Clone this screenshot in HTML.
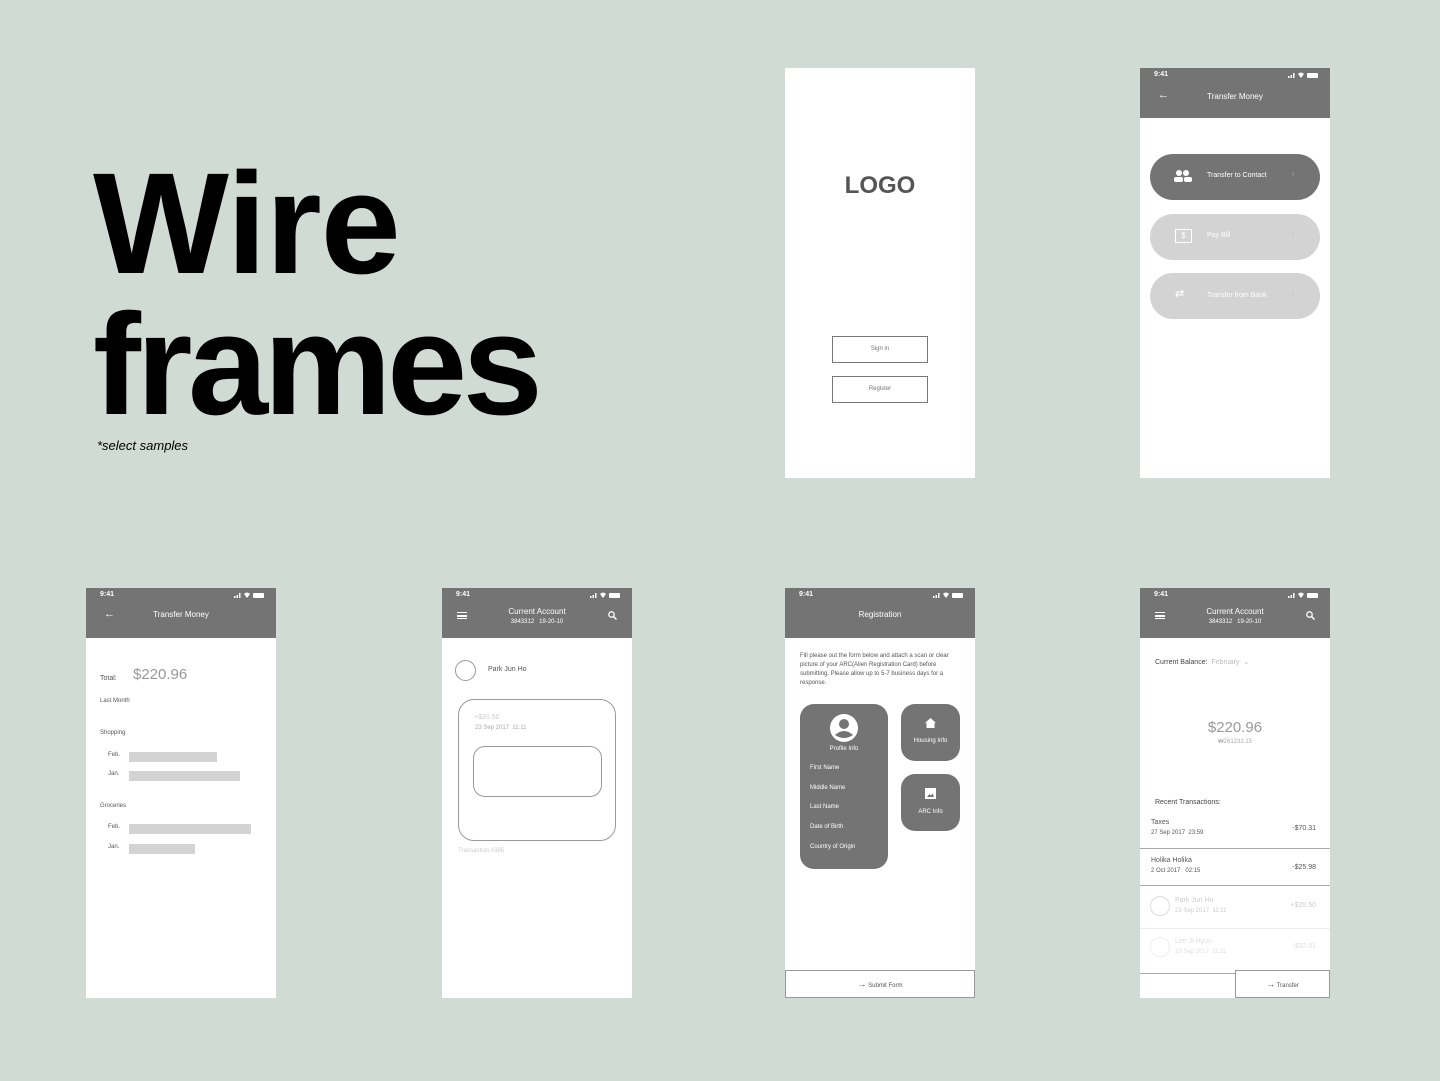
<!DOCTYPE html>
<html><head><meta charset="utf-8"><style>
*{margin:0;padding:0;box-sizing:border-box}
body{width:1440px;height:1081px;background:#d1dbd6;position:relative;overflow:hidden;font-family:"Liberation Sans",sans-serif}
.a{position:absolute;white-space:nowrap}
.ph{position:absolute;width:190px;height:410px;background:#fff;overflow:hidden}
.hd{position:absolute;left:0;top:0;width:190px;height:50px;background:#747474}
.t{font-size:7px;font-weight:bold;color:#fff;left:14px;top:3px}
.st{right:10px;top:4px;width:32px;height:6px}
.w{color:#fff}
.s7{font-size:7px}.s6{font-size:6px}.s8{font-size:8px}
.g{color:#555}.lg{color:#ccc}
.bar{position:absolute;height:10px;background:#d3d3d3}
</style></head><body>
<div class="a" style="left:93px;top:152px;font-size:144px;font-weight:bold;letter-spacing:-1px;line-height:1">Wire</div>
<div class="a" style="left:93px;top:293px;font-size:144px;font-weight:bold;letter-spacing:-4.5px;line-height:1">frames</div>
<div class="a" style="left:97px;top:438px;font-size:13px;font-style:italic">*select samples</div>

<div class="ph" style="left:785px;top:68px">
<div class="a" style="left:0;width:190px;text-align:center;top:104px;font-size:24px;font-weight:bold;color:#555">LOGO</div>
<div class="a s6" style="left:47px;top:268px;width:96px;height:27px;border:1px solid #777;text-align:center;line-height:25px;color:#777">Sign in</div>
<div class="a s6" style="left:47px;top:308px;width:96px;height:27px;border:1px solid #777;text-align:center;line-height:25px;color:#777">Register</div>
</div>

<div class="ph" style="left:1140px;top:68px">
<div class="hd"><div class="a t">9:41</div>
<svg class="a st" viewBox="0 0 32 6"><rect x="0" y="4" width="1.5" height="2" fill="#fff"/><rect x="2.5" y="3" width="1.5" height="3" fill="#fff"/><rect x="5" y="1" width="1.5" height="5" fill="#fff"/><path d="M10 2 Q13 -1 16 2 L13 6Z" fill="#fff"/><rect x="19" y="1" width="11" height="5" rx="1" fill="#fff"/></svg>
<div class="a w" style="left:18px;top:21px;font-size:11px">←</div>
<div class="a w s8" style="left:0;width:190px;text-align:center;top:24px">Transfer Money</div></div>
<div class="a" style="left:10px;top:86px;width:170px;height:46px;border-radius:23px;background:#747474"></div>
<svg class="a" style="left:34px;top:101px" width="18" height="13" viewBox="0 0 18 13"><circle cx="5" cy="4" r="3" fill="#fff"/><circle cx="12" cy="4" r="3" fill="#fff"/><rect x="0" y="8" width="9" height="5" rx="2" fill="#fff"/><rect x="10" y="8" width="8" height="5" rx="2" fill="#fff"/></svg>
<div class="a w s7" style="left:67px;top:104px">Transfer to Contact</div><div class="a w s7" style="left:152px;top:103px;color:#bbb">›</div>
<div class="a" style="left:10px;top:146px;width:170px;height:46px;border-radius:23px;background:#d3d3d3"></div>
<div class="a" style="left:35px;top:161px;width:17px;height:14px;border:1.5px solid #fff;color:#fff;font-size:8px;text-align:center;line-height:11px">$</div>
<div class="a w s7" style="left:67px;top:164px">Pay Bill</div><div class="a s7" style="left:152px;top:163px;color:#bbb">›</div>
<div class="a" style="left:10px;top:205px;width:170px;height:46px;border-radius:23px;background:#d3d3d3"></div>
<div class="a w" style="left:35px;top:219px;font-size:11px">⇄</div>
<div class="a w s7" style="left:67px;top:224px">Transfer from Bank</div><div class="a s7" style="left:152px;top:223px;color:#bbb">›</div>
</div>

<div class="ph" style="left:86px;top:588px">
<div class="hd"><div class="a t">9:41</div>
<svg class="a st" viewBox="0 0 32 6"><rect x="0" y="4" width="1.5" height="2" fill="#fff"/><rect x="2.5" y="3" width="1.5" height="3" fill="#fff"/><rect x="5" y="1" width="1.5" height="5" fill="#fff"/><path d="M10 2 Q13 -1 16 2 L13 6Z" fill="#fff"/><rect x="19" y="1" width="11" height="5" rx="1" fill="#fff"/></svg>
<div class="a w" style="left:18px;top:20px;font-size:11px">←</div>
<div class="a w s8" style="left:0;width:190px;text-align:center;top:22px">Transfer Money</div></div>
<div class="a s7 g" style="left:14px;top:87px">Total:</div>
<div class="a" style="left:47px;top:78px;font-size:15px;color:#999">$220.96</div>
<div class="a s6 g" style="left:14px;top:110px">Last Month</div>
<div class="a s6 g" style="left:14px;top:142px">Shopping</div>
<div class="a s6 g" style="left:22px;top:164px">Feb.</div><div class="bar" style="left:43px;top:164px;width:88px"></div>
<div class="a s6 g" style="left:22px;top:183px">Jan.</div><div class="bar" style="left:43px;top:183px;width:111px"></div>
<div class="a s6 g" style="left:14px;top:215px">Groceries</div>
<div class="a s6 g" style="left:22px;top:236px">Feb.</div><div class="bar" style="left:43px;top:236px;width:122px"></div>
<div class="a s6 g" style="left:22px;top:256px">Jan.</div><div class="bar" style="left:43px;top:256px;width:66px"></div>
</div>

<div class="ph" style="left:442px;top:588px">
<div class="hd"><div class="a t">9:41</div>
<svg class="a st" viewBox="0 0 32 6"><rect x="0" y="4" width="1.5" height="2" fill="#fff"/><rect x="2.5" y="3" width="1.5" height="3" fill="#fff"/><rect x="5" y="1" width="1.5" height="5" fill="#fff"/><path d="M10 2 Q13 -1 16 2 L13 6Z" fill="#fff"/><rect x="19" y="1" width="11" height="5" rx="1" fill="#fff"/></svg>
<div class="a" style="left:15px;top:24px;width:10px;height:7px;border-top:1.5px solid #fff;border-bottom:1.5px solid #fff"></div><div class="a" style="left:15px;top:27px;width:10px;height:1.5px;background:#fff"></div>
<div class="a w s8" style="left:0;width:190px;text-align:center;top:19px;line-height:9px">Current Account<br><span style="font-size:6px">3843312 &nbsp; 19-20-10</span></div>
<svg class="a" style="left:166px;top:23px" width="9" height="9" viewBox="0 0 9 9"><circle cx="3.5" cy="3.5" r="2.7" fill="none" stroke="#fff" stroke-width="1.3"/><path d="M5.5 5.5 L8.5 8.5" stroke="#fff" stroke-width="1.5"/></svg></div>
<div class="a" style="left:13px;top:72px;width:21px;height:21px;border-radius:50%;border:1px solid #999"></div>
<div class="a s7 g" style="left:46px;top:78px">Park Jun Ho</div>
<div class="a" style="left:16px;top:111px;width:158px;height:142px;border:1px solid #999;border-radius:16px"></div>
<div class="a s7 lg" style="left:32px;top:126px">+$20.50</div>
<div class="a s6" style="left:33px;top:137px;color:#aaa">23 Sep 2017 &nbsp;11:11</div>
<div class="a" style="left:31px;top:158px;width:129px;height:51px;border:1px solid #999;border-radius:12px"></div>
<div class="a s6 lg" style="left:16px;top:260px">Transaction #385</div>
</div>

<div class="ph" style="left:785px;top:588px">
<div class="hd"><div class="a t">9:41</div>
<svg class="a st" viewBox="0 0 32 6"><rect x="0" y="4" width="1.5" height="2" fill="#fff"/><rect x="2.5" y="3" width="1.5" height="3" fill="#fff"/><rect x="5" y="1" width="1.5" height="5" fill="#fff"/><path d="M10 2 Q13 -1 16 2 L13 6Z" fill="#fff"/><rect x="19" y="1" width="11" height="5" rx="1" fill="#fff"/></svg>
<div class="a w s8" style="left:0;width:190px;text-align:center;top:22px">Registration</div></div>
<div class="a g" style="left:15px;top:64px;font-size:6px;line-height:9px;white-space:normal;width:165px">Fill please out the form below and attach a scan or clear picture of your ARC(Alien Registration Card) before submitting. Please allow up to 5-7 business days for a response.</div>
<div class="a" style="left:15px;top:116px;width:88px;height:165px;border-radius:14px;background:#747474"></div>
<svg class="a" style="left:45px;top:126px" width="28" height="28" viewBox="0 0 28 28"><circle cx="14" cy="14" r="14" fill="#fff"/><circle cx="14" cy="10" r="5" fill="#747474"/><path d="M5 21 Q14 13 23 21 Q14 27 5 21Z" fill="#747474"/></svg>
<div class="a w s6" style="left:15px;width:88px;text-align:center;top:158px">Profile Info</div>
<div class="a w s6" style="left:25px;top:177px">First Name</div>
<div class="a w s6" style="left:25px;top:197px">Middle Name</div>
<div class="a w s6" style="left:25px;top:216px">Last Name</div>
<div class="a w s6" style="left:25px;top:236px">Date of Birth</div>
<div class="a w s6" style="left:25px;top:256px">Country of Origin</div>
<div class="a" style="left:116px;top:116px;width:59px;height:57px;border-radius:14px;background:#747474"></div>
<svg class="a" style="left:140px;top:130px" width="11" height="10" viewBox="0 0 11 10"><path d="M5.5 0 L11 5 H9.5 V10 H1.5 V5 H0Z" fill="#fff"/></svg>
<div class="a w s6" style="left:116px;width:59px;text-align:center;top:150px">Housing Info</div>
<div class="a" style="left:116px;top:186px;width:59px;height:57px;border-radius:14px;background:#747474"></div>
<svg class="a" style="left:140px;top:200px" width="11" height="11" viewBox="0 0 11 11"><rect width="11" height="11" fill="#fff"/><path d="M2 9 L4.5 6 L6 7.5 L7.5 5.5 L9 9Z" fill="#747474"/></svg>
<div class="a w s6" style="left:116px;width:59px;text-align:center;top:221px">ARC Info</div>
<div class="a" style="left:0;top:382px;width:190px;height:28px;border:1px solid #999"></div>
<div class="a s6 g" style="left:0;width:190px;text-align:center;top:391px"><span style="font-size:9px">→</span> Submit Form</div>
</div>

<div class="ph" style="left:1140px;top:588px">
<div class="hd"><div class="a t">9:41</div>
<svg class="a st" viewBox="0 0 32 6"><rect x="0" y="4" width="1.5" height="2" fill="#fff"/><rect x="2.5" y="3" width="1.5" height="3" fill="#fff"/><rect x="5" y="1" width="1.5" height="5" fill="#fff"/><path d="M10 2 Q13 -1 16 2 L13 6Z" fill="#fff"/><rect x="19" y="1" width="11" height="5" rx="1" fill="#fff"/></svg>
<div class="a" style="left:15px;top:24px;width:10px;height:7px;border-top:1.5px solid #fff;border-bottom:1.5px solid #fff"></div><div class="a" style="left:15px;top:27px;width:10px;height:1.5px;background:#fff"></div>
<div class="a w s8" style="left:0;width:190px;text-align:center;top:19px;line-height:9px">Current Account<br><span style="font-size:6px">3843312 &nbsp; 19-20-10</span></div>
<svg class="a" style="left:166px;top:23px" width="9" height="9" viewBox="0 0 9 9"><circle cx="3.5" cy="3.5" r="2.7" fill="none" stroke="#fff" stroke-width="1.3"/><path d="M5.5 5.5 L8.5 8.5" stroke="#fff" stroke-width="1.5"/></svg></div>
<div class="a s7" style="left:15px;top:70px;color:#444">Current Balance: <span style="color:#bbb">&nbsp;February &nbsp;⌄</span></div>
<div class="a" style="left:0;width:190px;text-align:center;top:131px;font-size:15px;color:#999">$220.96</div>
<div class="a s6" style="left:0;width:190px;text-align:center;top:151px;color:#aaa">₩261232.15</div>
<div class="a s7" style="left:15px;top:211px;color:#444">Recent Transactions:</div>
<div class="a s7 g" style="left:11px;top:231px">Taxes</div><div class="a s6 g" style="left:11px;top:242px">27 Sep 2017 &nbsp;23:59</div><div class="a s7 g" style="right:14px;top:237px">-$70.31</div>
<div class="a" style="left:0;top:260px;width:190px;height:1px;background:#aaa"></div>
<div class="a s7 g" style="left:11px;top:269px">Holika Holika</div><div class="a s6 g" style="left:11px;top:280px">2 Oct 2017 &nbsp; 02:15</div><div class="a s7 g" style="right:14px;top:276px">-$25.98</div>
<div class="a" style="left:0;top:297px;width:190px;height:1px;background:#aaa"></div>
<div class="a" style="left:10px;top:308px;width:20px;height:20px;border-radius:50%;border:1px solid #ddd"></div>
<div class="a s7 lg" style="left:35px;top:309px">Park Jun Ho</div><div class="a s6 lg" style="left:35px;top:320px">23 Sep 2017 &nbsp;11:11</div><div class="a s7 lg" style="right:14px;top:314px">+$20.50</div>
<div class="a" style="left:0;top:340px;width:190px;height:1px;background:#eee"></div>
<div class="a" style="left:10px;top:349px;width:20px;height:20px;border-radius:50%;border:1px solid #eee"></div>
<div class="a s7" style="left:35px;top:350px;color:#ddd">Lee Ji Hyun</div><div class="a s6" style="left:35px;top:361px;color:#ddd">23 Sep 2017 &nbsp;11:11</div><div class="a s7" style="right:14px;top:355px;color:#ddd">-$32.01</div>
<div class="a" style="left:0;top:385px;width:96px;height:1px;background:#aaa"></div>
<div class="a" style="left:95px;top:382px;width:95px;height:28px;border:1px solid #999;background:#fff"></div>
<div class="a s6 g" style="left:95px;width:95px;text-align:center;top:391px"><span style="font-size:9px">→</span> Transfer</div>
</div>
</body></html>
